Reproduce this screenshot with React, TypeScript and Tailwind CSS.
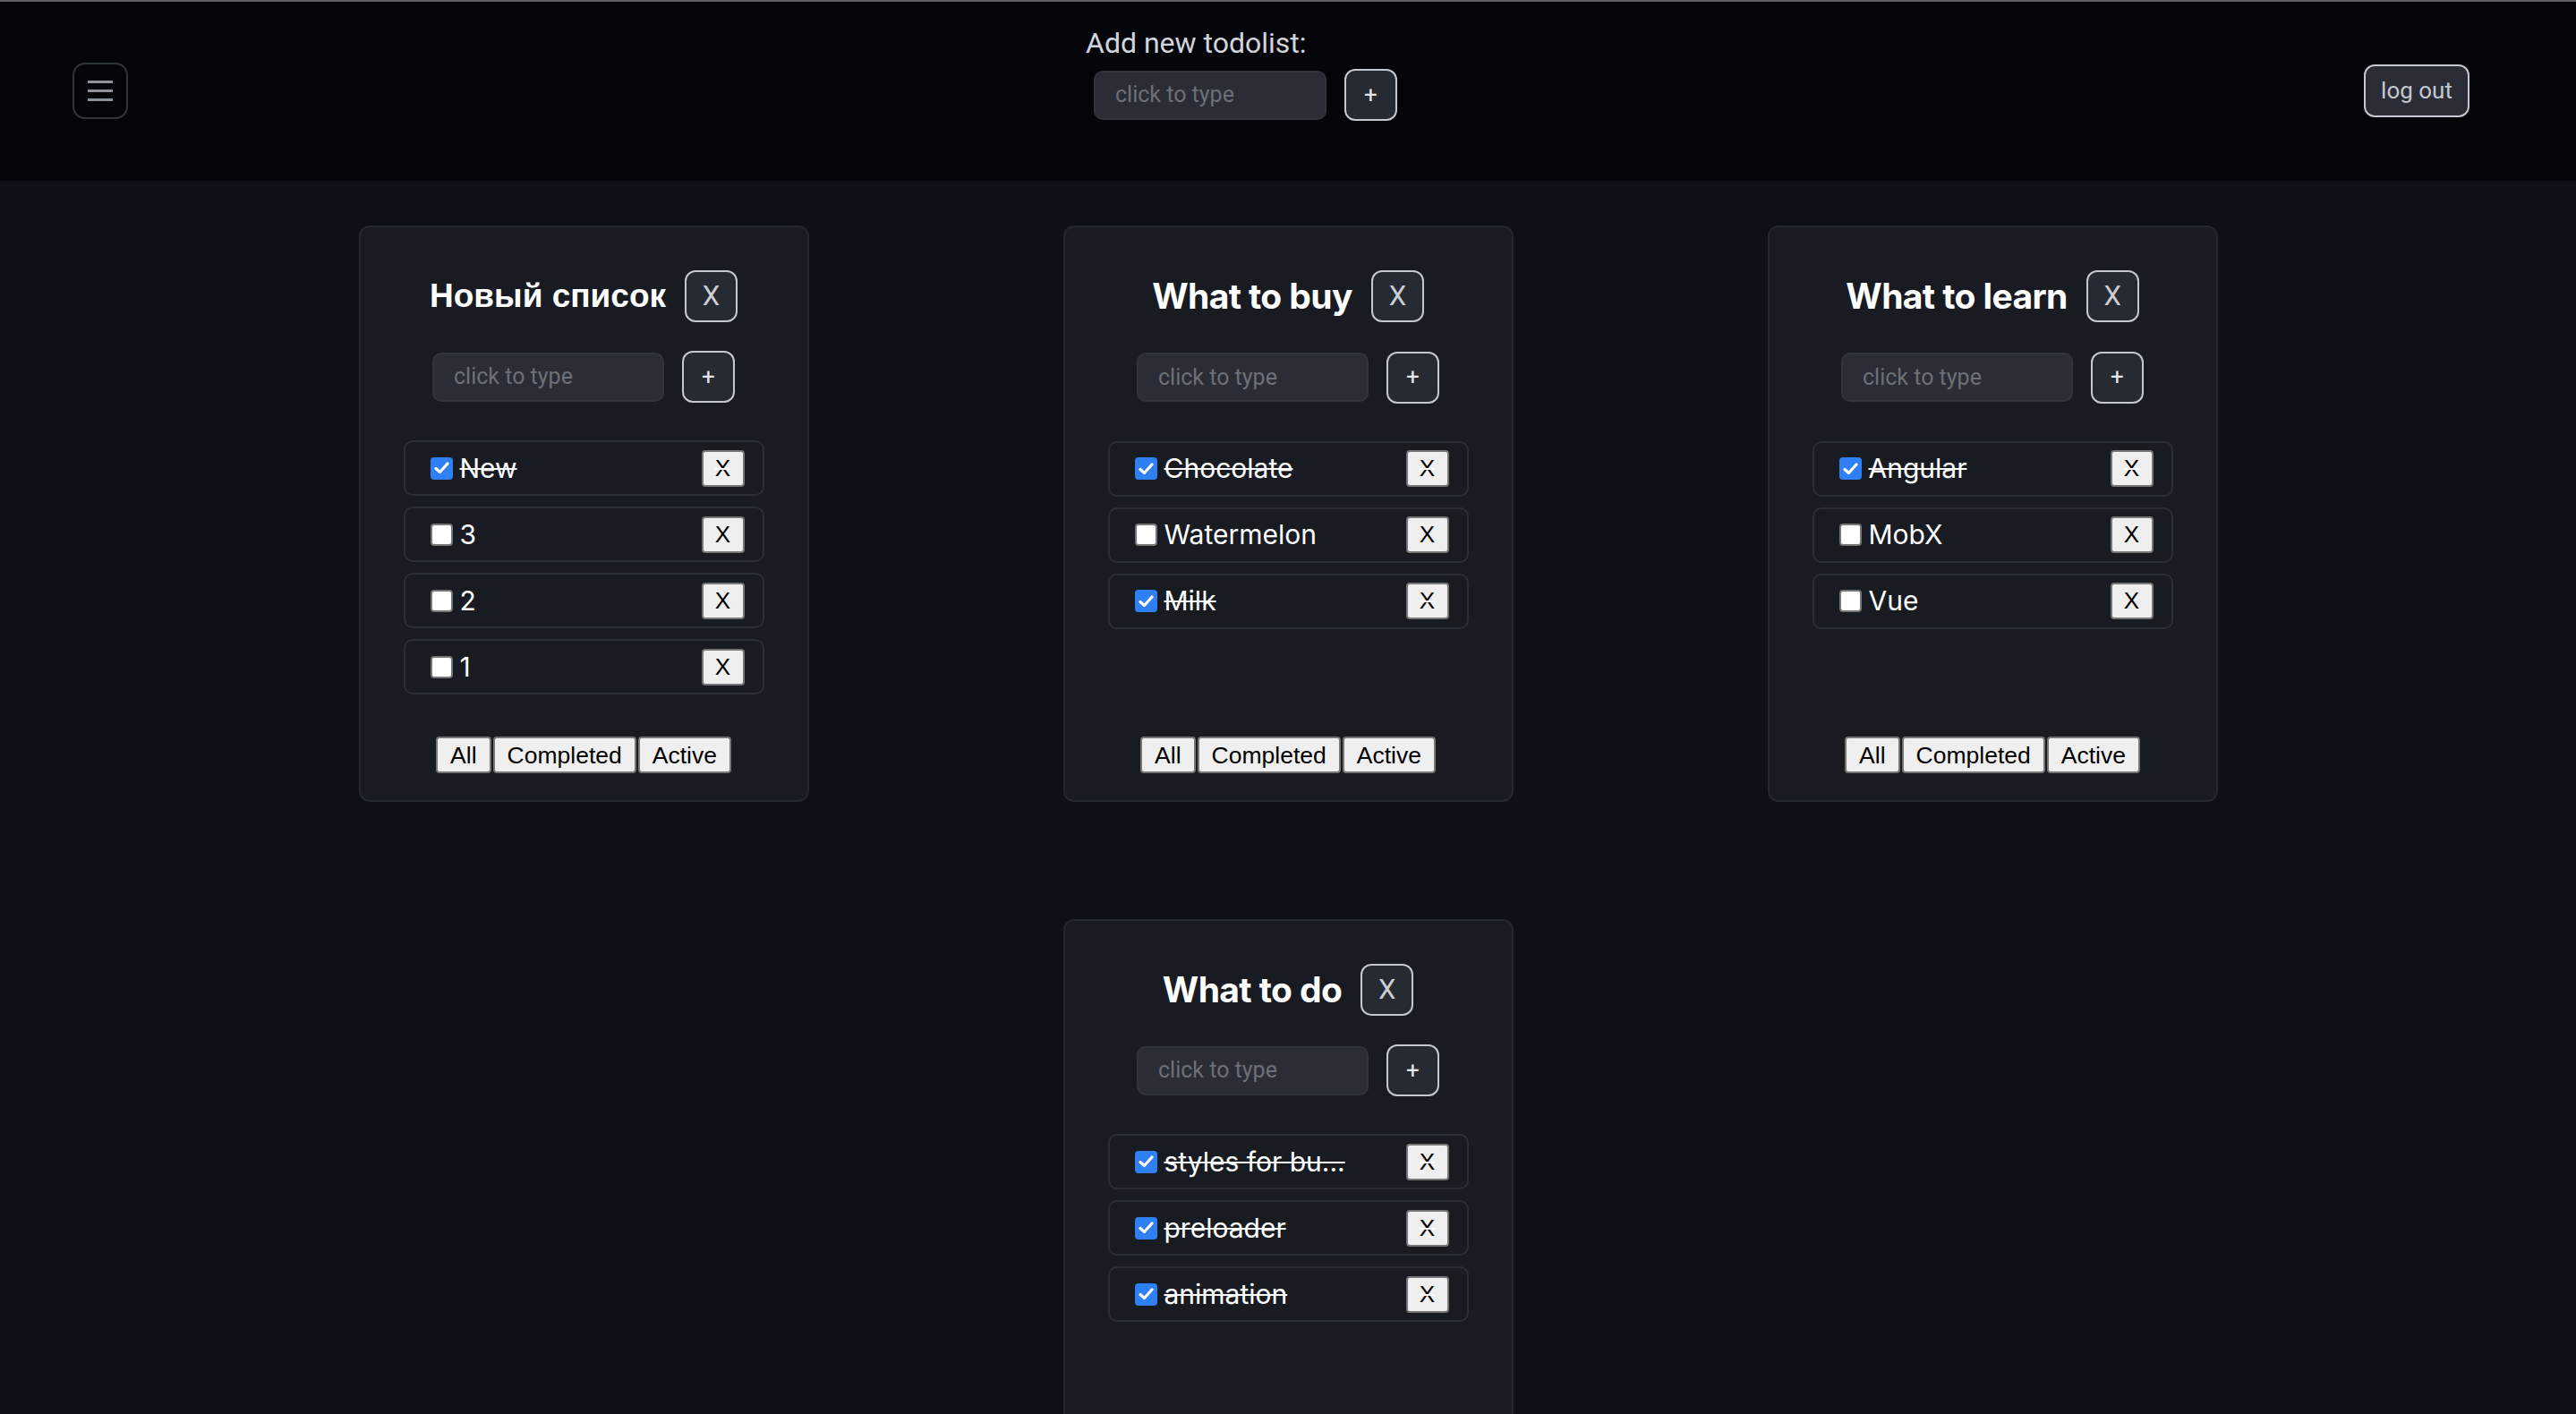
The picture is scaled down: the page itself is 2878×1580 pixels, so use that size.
import React from 'react'

interface Task {
  id: string
  title: string
  isDone: boolean
}

interface TodoList {
  id: string
  title: string
  cyrillic?: boolean
  tasks: Task[]
}

const LISTS: TodoList[] = [
  {
    id: 'l1', title: 'Новый список', cyrillic: true,
    tasks: [
      { id: 't1', title: 'New', isDone: true },
      { id: 't2', title: '3', isDone: false },
      { id: 't3', title: '2', isDone: false },
      { id: 't4', title: '1', isDone: false },
    ],
  },
  {
    id: 'l2', title: 'What to buy',
    tasks: [
      { id: 't5', title: 'Chocolate', isDone: true },
      { id: 't6', title: 'Watermelon', isDone: false },
      { id: 't7', title: 'Milk', isDone: true },
    ],
  },
  {
    id: 'l3', title: 'What to learn',
    tasks: [
      { id: 't8', title: 'Angular', isDone: true },
      { id: 't9', title: 'MobX', isDone: false },
      { id: 't10', title: 'Vue', isDone: false },
    ],
  },
  {
    id: 'l4', title: 'What to do',
    tasks: [
      { id: 't11', title: 'styles for bu...', isDone: true },
      { id: 't12', title: 'preloader', isDone: true },
      { id: 't13', title: 'animation', isDone: true },
    ],
  },
]

const roboto = 'font-["Roboto","Liberation_Sans",sans-serif]'
const arial = 'font-["Liberation_Sans",Arial,sans-serif]'
const inter = 'font-["Inter","Liberation_Sans",sans-serif]'

function AddItemForm({ wide }: { wide?: boolean }) {
  return (
    <div className="flex items-center gap-[20px]">
      <div
        className={`${wide ? 'w-[260px]' : 'w-[259px]'} h-[55px] flex items-center pl-[22px] rounded-[10px] bg-[#2a2d35] border-2 border-[#30343c] ${roboto} text-[25px] text-[#6c7078]`}
      >
        click to type
      </div>
      <button className={`w-[59px] h-[58px] flex items-center justify-center rounded-[12px] bg-[#262a33] border-2 border-[#c4c8d0] text-[#e4e6ea] text-[26px] ${roboto}`}>
        +
      </button>
    </div>
  )
}

function CheckBox({ checked }: { checked: boolean }) {
  if (checked) {
    return (
      <span className="w-[25px] h-[25px] shrink-0 rounded-[4px] bg-[#2f7ff5] flex items-center justify-center">
        <svg width="17" height="14" viewBox="0 0 17 14" fill="none">
          <path d="M2 7.5 L6.5 11.5 L15 2" stroke="white" strokeWidth="3.2" strokeLinecap="round" strokeLinejoin="round" />
        </svg>
      </span>
    )
  }
  return <span className="w-[25px] h-[25px] shrink-0 rounded-[4px] bg-white border-2 border-[#767676]" />
}

function TaskRow({ task }: { task: Task }) {
  return (
    <li className="h-[62px] flex items-center justify-between pl-[28px] pr-[20px] rounded-[10px] border-2 border-[#2a2e36]">
      <div className="flex items-center gap-[8px]">
        <CheckBox checked={task.isDone} />
        <span className={`${inter} text-[30px] text-white ${task.isDone ? 'line-through decoration-white decoration-2' : ''}`}>
          {task.title}
        </span>
      </div>
      <button
        className={`w-[48px] h-[41px] flex items-center justify-center rounded-[4px] bg-[#efefef] border-2 border-[#767676] text-black text-[26px] ${arial} ${task.isDone ? 'line-through decoration-white' : ''}`}
      >
        X
      </button>
    </li>
  )
}

function Card({ list }: { list: TodoList }) {
  return (
    <div className="w-[503px] flex flex-col items-center pt-[48px] pb-[30px] rounded-[12px] bg-[#181b22] border-2 border-[#23272e]">
      <div className="flex items-center gap-[21px]">
        <h3
          className={
            list.cyrillic
              ? `${arial} font-bold text-[37px] text-white`
              : `${inter} font-bold text-[39px] tracking-[-0.6px] text-white`
          }
        >
          {list.title}
        </h3>
        <button className={`w-[59px] h-[58px] flex items-center justify-center rounded-[12px] bg-[#262a33] border-2 border-[#c4c8d0] text-[#c9cdd5] text-[31px] ${roboto}`}>
          X
        </button>
      </div>
      <div className="mt-[32px]">
        <AddItemForm />
      </div>
      {/* list keeps room for four rows */}
      <ul className="mt-[42px] w-[403px] min-h-[284px] flex flex-col gap-[12px]">
        {list.tasks.map(t => <TaskRow key={t.id} task={t} />)}
      </ul>
      <div className="flex-1" />
      <div className={`mt-[46px] flex gap-[2px] ${arial} text-[26.5px] text-black`}>
        <button className="h-[41px] px-[14px] rounded-[4px] bg-[#efefef] border-2 border-[#767676]">All</button>
        <button className="h-[41px] px-[14px] rounded-[4px] bg-[#efefef] border-2 border-[#767676]">Completed</button>
        <button className="h-[41px] px-[14px] rounded-[4px] bg-[#efefef] border-2 border-[#767676]">Active</button>
      </div>
    </div>
  )
}

export default function App() {
  return (
    <div className="min-h-screen bg-[#0d1117]">
      <header className="h-[202px] border-t-2 border-[#5c5f66] bg-[#03050a] flex items-start justify-between pl-[81px] pr-[119px]">
        <button className="mt-[68px] w-[62px] h-[63px] rounded-[14px] border-2 border-[#30363d] flex flex-col items-center justify-center gap-[7.5px]">
          <span className="block w-[28px] h-[2.5px] bg-[#8b929c]" />
          <span className="block w-[28px] h-[2.5px] bg-[#8b929c]" />
          <span className="block w-[28px] h-[2.5px] bg-[#8b929c]" />
        </button>
        <div className="mt-[27px] ml-[-10px] flex flex-col items-start">
          <h3 className={`${roboto} text-[32px] text-[#d1d5db] leading-[39px]`}>Add new todolist:</h3>
          <div className="mt-[9px] ml-[9px]">
            <AddItemForm wide />
          </div>
        </div>
        <button className={`mt-[70px] w-[118px] h-[59px] rounded-[12px] bg-[#2a2d35] border-2 border-[#c4c8d0] text-[#c3c7cf] text-[26px] ${roboto}`}>
          log out
        </button>
      </header>
      <main className="w-[2077px] mx-auto pt-[50px] pb-[60px] flex flex-wrap justify-center gap-x-[284px] gap-y-[131px]">
        {LISTS.map(l => <Card key={l.id} list={l} />)}
      </main>
    </div>
  )
}
